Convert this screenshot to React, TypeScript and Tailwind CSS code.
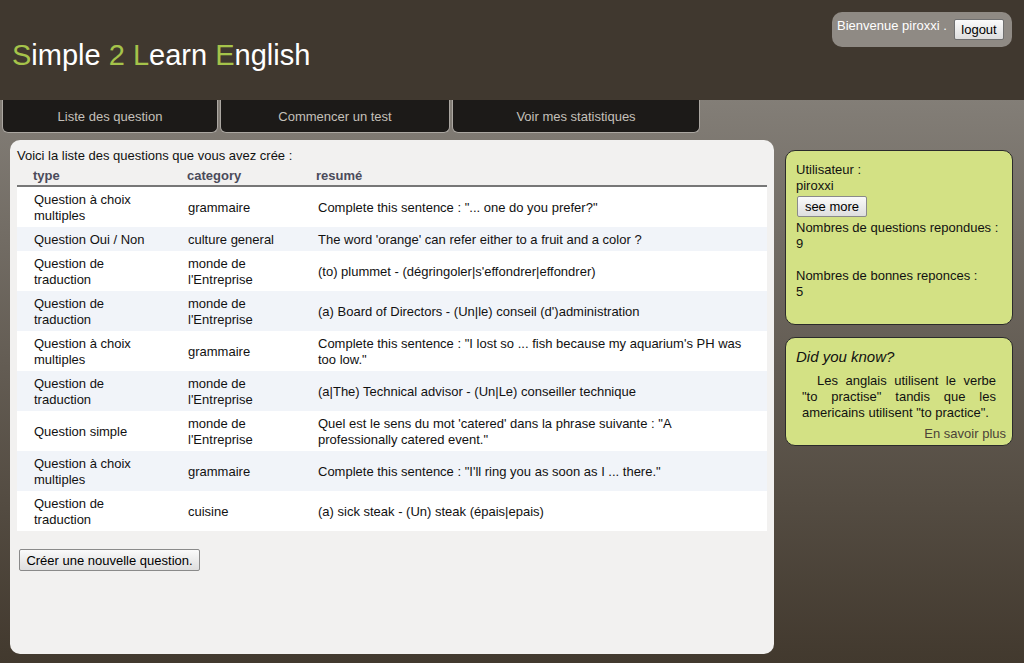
import React from "react";

const rows: { type: string; cat: string; res: string }[] = [
  { type: "Question à choix multiples", cat: "grammaire", res: 'Complete this sentence : "... one do you prefer?"' },
  { type: "Question Oui / Non", cat: "culture general", res: "The word 'orange' can refer either to a fruit and a color ?" },
  { type: "Question de traduction", cat: "monde de l'Entreprise", res: "(to) plummet - (dégringoler|s'effondrer|effondrer)" },
  { type: "Question de traduction", cat: "monde de l'Entreprise", res: "(a) Board of Directors - (Un|le) conseil (d')administration" },
  { type: "Question à choix multiples", cat: "grammaire", res: 'Complete this sentence : "I lost so ... fish because my aquarium\'s PH was too low."' },
  { type: "Question de traduction", cat: "monde de l'Entreprise", res: "(a|The) Technical advisor - (Un|Le) conseiller technique" },
  { type: "Question simple", cat: "monde de l'Entreprise", res: 'Quel est le sens du mot \'catered\' dans la phrase suivante : "A professionally catered event."' },
  { type: "Question à choix multiples", cat: "grammaire", res: 'Complete this sentence : "I\'ll ring you as soon as I ... there."' },
  { type: "Question de traduction", cat: "cuisine", res: "(a) sick steak - (Un) steak (épais|epais)" },
];

const btn =
  "border border-[#8a8a8a] rounded-[2px] bg-gradient-to-b from-[#fafafa] to-[#dedede] text-[13px] leading-4 text-black";

export default function App() {
  return (
    <div className="w-[1024px] min-h-[663px] flex flex-col font-['Liberation_Sans',Arial,sans-serif] text-[13px] leading-4 text-[#111] bg-gradient-to-b from-[#8f8b85] to-[#42392e]">
      <header className="h-[100px] bg-[#40382f] flex justify-between items-start shrink-0">
        <h1 className="pl-3 pt-[38px] text-[29px] leading-[35px] text-white font-normal">
          <span className="text-[#a5c34a]">S</span>imple <span className="text-[#a5c34a]">2</span>{" "}
          <span className="text-[#a5c34a]">L</span>earn <span className="text-[#a5c34a]">E</span>nglish
        </h1>
        <div className="mt-3 mr-3 w-[180px] h-[35px] rounded-[10px] bg-[#8f8a84] flex justify-between items-start pl-[5px] pr-2 pt-[6px]">
          <span className="text-white">Bienvenue piroxxi .</span>
          <button className={`${btn} w-[50px] h-[21px] mt-px pt-px border-[#707070]`}>logout</button>
        </div>
      </header>

      <nav className="h-[33px] flex gap-[2px] pl-[2px] shrink-0">
        {[
          ["Liste des question", "w-[216px]"],
          ["Commencer un test", "w-[230px]"],
          ["Voir mes statistiques", "w-[248px]"],
        ].map(([t, w]) => (
          <div
            key={t}
            className={`${w} h-[33px] pt-[2px] bg-[#1c1a18] border-x border-b border-[#aba7a1] rounded-b-[6px] flex items-center justify-center text-[#c4c0ba]`}
          >
            {t}
          </div>
        ))}
      </nav>

      <main className="flex items-start">
        <section className="ml-[10px] mt-[7px] mb-[9px] w-[764px] h-[514px] rounded-[10px] bg-[#f2f1f0] px-[7px] pt-2">
          <p>Voici la liste des questions que vous avez crée :</p>
          <table className="w-[750px] border-collapse table-fixed">
            <colgroup>
              <col className="w-[163px]" />
              <col className="w-[130px]" />
              <col />
            </colgroup>
            <thead>
              <tr className="border-b-2 border-[#777]">
                <th className="text-left font-bold text-[#4b4b5a] pl-4 pt-[4px] pb-[1px]">type</th>
                <th className="text-left font-bold text-[#4b4b5a] pl-[7px] pt-[4px] pb-[1px]">category</th>
                <th className="text-left font-bold text-[#4b4b5a] pl-[6px] pt-[4px] pb-[1px]">resumé</th>
              </tr>
            </thead>
            <tbody>
              {rows.map((r, i) => (
                <tr key={i} className={i % 2 === 0 ? "bg-white" : "bg-[#f1f4f9]"}>
                  <td className="pl-[17px] pr-[26px] pt-[5px] pb-[3px] align-middle">{r.type}</td>
                  <td className="pl-2 pr-2 pt-[5px] pb-[3px] align-middle">{r.cat}</td>
                  <td className="pl-2 pr-[16px] pt-[5px] pb-[3px] align-middle">{r.res}</td>
                </tr>
              ))}
            </tbody>
          </table>
          <button className={`${btn} mt-[18px] ml-[2px] h-[22px] w-[181px] pt-px`}>Créer une nouvelle question.</button>
        </section>

        <aside className="ml-[11px] mt-[17px] w-[228px] flex flex-col gap-3">
          <div className="h-[175px] rounded-[10px] border border-[#2b2b2b] bg-[#d3e184] pl-[10px] pt-[11px]">
            <p>Utilisateur :</p>
            <p>piroxxi</p>
            <button className={`${btn} mt-[2px] ml-px w-[70px] h-[21px] pt-px`}>see more</button>
            <p className="mt-[3px]">Nombres de questions repondues :</p>
            <p>9</p>
            <p>&nbsp;</p>
            <p>Nombres de bonnes reponces :</p>
            <p>5</p>
          </div>
          <div className="h-[109px] rounded-[10px] border border-[#2b2b2b] bg-[#d3e184] pt-[10px]">
            <p className="pl-[10px] italic text-[15px] leading-[18px]">Did you know?</p>
            <p className="mt-[7px] px-[16px] text-justify indent-[15px]">
              Les anglais utilisent le verbe "to practise" tandis que les americains utilisent "to practice".
            </p>
            <p className="text-right pr-[6px] mt-[5px] text-[#4b4338]">En savoir plus</p>
          </div>
        </aside>
      </main>
    </div>
  );
}
